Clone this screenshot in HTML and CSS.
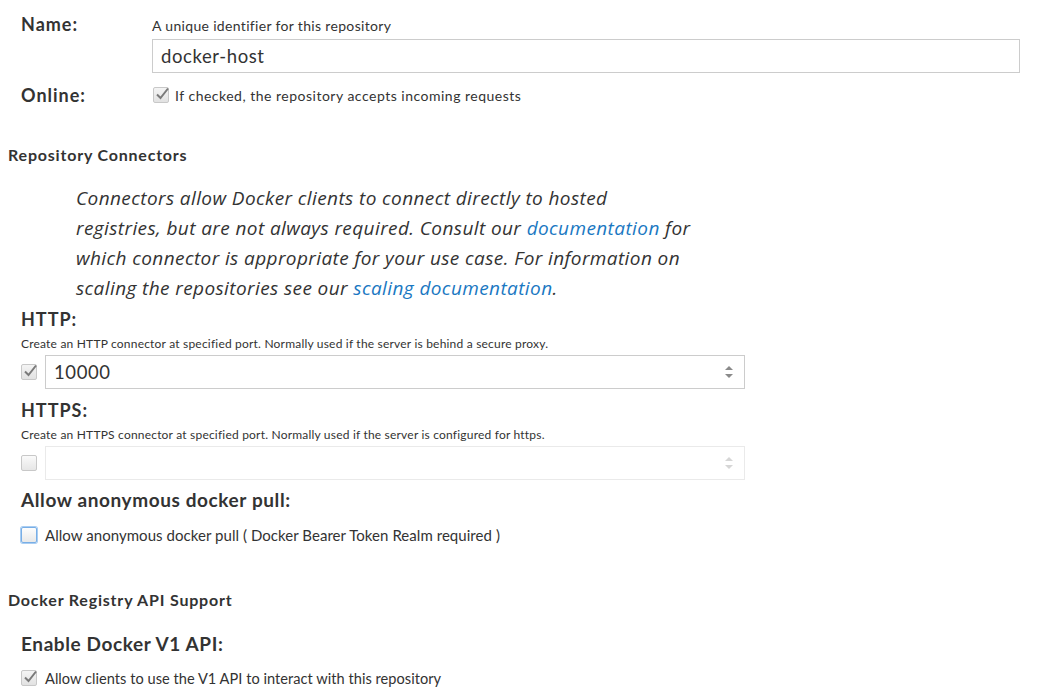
FILE: index.html
```html
<!DOCTYPE html>
<html>
<head>
<meta charset="utf-8">
<link rel="stylesheet" href="styles.css">
</head>
<body>
<div class="page">
  <div class="grid">
    <div class="lbl">Name:</div>
    <div class="fld">
      <div class="help">A unique identifier for this repository</div>
      <div class="input name">docker-host</div>
    </div>
    <div class="lbl">Online:</div>
    <div class="fld check-line">
      <span class="cb checked"><svg viewBox="0 0 16 16" width="16" height="16"><path d="M3 8.5 L6.5 12 L14 2.5" fill="none" stroke="#7a7a7a" stroke-width="2"/></svg></span>
      <span class="cb-text">If checked, the repository accepts incoming requests</span>
    </div>
  </div>

  <h3 class="section">Repository Connectors</h3>
  <p class="intro">Connectors allow Docker clients to connect directly to hosted registries, but are not always required. Consult our <a href="#">documentation</a> for which connector is appropriate for your use case. For information on scaling the repositories see our <a href="#">scaling documentation</a>.</p>

  <div class="field first">
    <div class="flabel">HTTP:</div>
    <div class="small">Create an HTTP connector at specified port. Normally used if the server is behind a secure proxy.</div>
    <div class="port-row">
      <span class="cb checked"><svg viewBox="0 0 16 16" width="16" height="16"><path d="M3 8.5 L6.5 12 L14 2.5" fill="none" stroke="#7a7a7a" stroke-width="2"/></svg></span>
      <div class="input port">10000<span class="spin"><svg viewBox="0 0 10 16" width="10" height="16"><path d="M1 6 L5 2 L9 6 Z M1 10 L5 14 L9 10 Z" fill="#8a8a8a"/></svg></span></div>
    </div>
  </div>

  <div class="field">
    <div class="flabel">HTTPS:</div>
    <div class="small">Create an HTTPS connector at specified port. Normally used if the server is configured for https.</div>
    <div class="port-row">
      <span class="cb"></span>
      <div class="input port disabled"><span class="spin"><svg viewBox="0 0 10 16" width="10" height="16"><path d="M1 6 L5 2 L9 6 Z M1 10 L5 14 L9 10 Z" fill="#d6d6d6"/></svg></span></div>
    </div>
  </div>

  <div class="field anon">
    <div class="flabel big">Allow anonymous docker pull:</div>
    <div class="check-line opt">
      <span class="cb focus"></span>
      <span class="cb-text anon-text">Allow anonymous docker pull ( Docker Bearer Token Realm required )</span>
    </div>
  </div>

  <h3 class="section api">Docker Registry API Support</h3>

  <div class="field v1">
    <div class="flabel big">Enable Docker V1 API:</div>
    <div class="check-line opt">
      <span class="cb checked"><svg viewBox="0 0 16 16" width="16" height="16"><path d="M3 8.5 L6.5 12 L14 2.5" fill="none" stroke="#7a7a7a" stroke-width="2"/></svg></span>
      <span class="cb-text v1-text">Allow clients to use the V1 API to interact with this repository</span>
    </div>
  </div>
</div>
</body>
</html>
```
FILE: styles.css
```css
* { box-sizing: border-box; }
html, body { margin: 0; padding: 0; background: #fff; }
body {
  font-family: "Lato", "Liberation Sans", sans-serif;
  color: #333;
}
.page { padding: 13px 0 0 8px; }

.grid {
  display: grid;
  grid-template-columns: 131px 868px;
  padding-left: 13px;
  row-gap: 11px;
}
.lbl {
  font-weight: bold;
  font-size: 18px;
  line-height: 22px;
  letter-spacing: 1px;
}
.help {
  font-size: 14px;
  line-height: 18px;
  margin-top: 4px;
  margin-bottom: 4px;
  letter-spacing: 0.33px;
}
.input {
  height: 34px;
  border: 1px solid #ccc;
  font-size: 18.5px;
  line-height: 32px;
  padding: 0 8px;
  color: #333;
  letter-spacing: 0.6px;
}
.check-line { display: flex; align-items: center; gap: 6px; height: 22px; }
.fld.check-line { padding-left: 1px; }
.opt.check-line { gap: 8px; }
.cb {
  width: 16px; height: 16px;
  flex: none;
  border: 1px solid #c8c8c8;
  border-radius: 2px;
  background: linear-gradient(#fafafa, #e6e6e6);
  display: inline-flex;
  position: relative;
}
.cb svg { position: absolute; left: 0; top: -2px; }
.cb.checked { background: linear-gradient(#f4f4f4, #e2e2e2); }
.cb.focus {
  border-color: #78aee6;
  box-shadow: 0 0 0 1px #a9cdf2;
  background: linear-gradient(#fdfdfd, #e8e8e8);
}
.cb-text { font-size: 14px; letter-spacing: 0.5px; }
.anon-text { font-size: 15px; letter-spacing: 0.05px; }
.v1-text { font-size: 14.6px; letter-spacing: 0.03px; }

.section {
  font-size: 16px;
  font-weight: bold;
  margin: 39px 0 0 0;
  line-height: 20px;
  letter-spacing: 0.8px;
}
.intro {
  font-family: "Open Sans", "Lato", sans-serif;
  font-style: italic;
  font-size: 19px;
  line-height: 30px;
  letter-spacing: 0.4px;
  margin: 18px 0 0 68px;
  width: 616px;
}
.intro a { color: #1a78c2; text-decoration: none; }

.field { padding-left: 13px; margin-top: 10px; }
.field.first { margin-top: 5px; }
.flabel {
  font-size: 18px;
  font-weight: bold;
  line-height: 22px;
  letter-spacing: 1px;
}
.flabel.big { font-size: 19px; line-height: 24px; letter-spacing: 0.6px; }
.small {
  font-size: 12px;
  line-height: 14px;
  margin-top: 7px;
  letter-spacing: 0.2px;
}
.port-row { display: flex; align-items: center; gap: 8px; margin-top: 4px; }
.port { width: 700px; position: relative; }
.port.disabled { border-color: #eaeaea; }
.spin { position: absolute; right: 10px; top: 8px; display: flex; }
.field.anon { margin-top: 8px; }
.opt { margin-top: 12px; }
.section.api { margin-top: 44px; }
.field.v1 { margin-top: 22px; }
.field.v1 .opt { margin-top: 11px; }
```
